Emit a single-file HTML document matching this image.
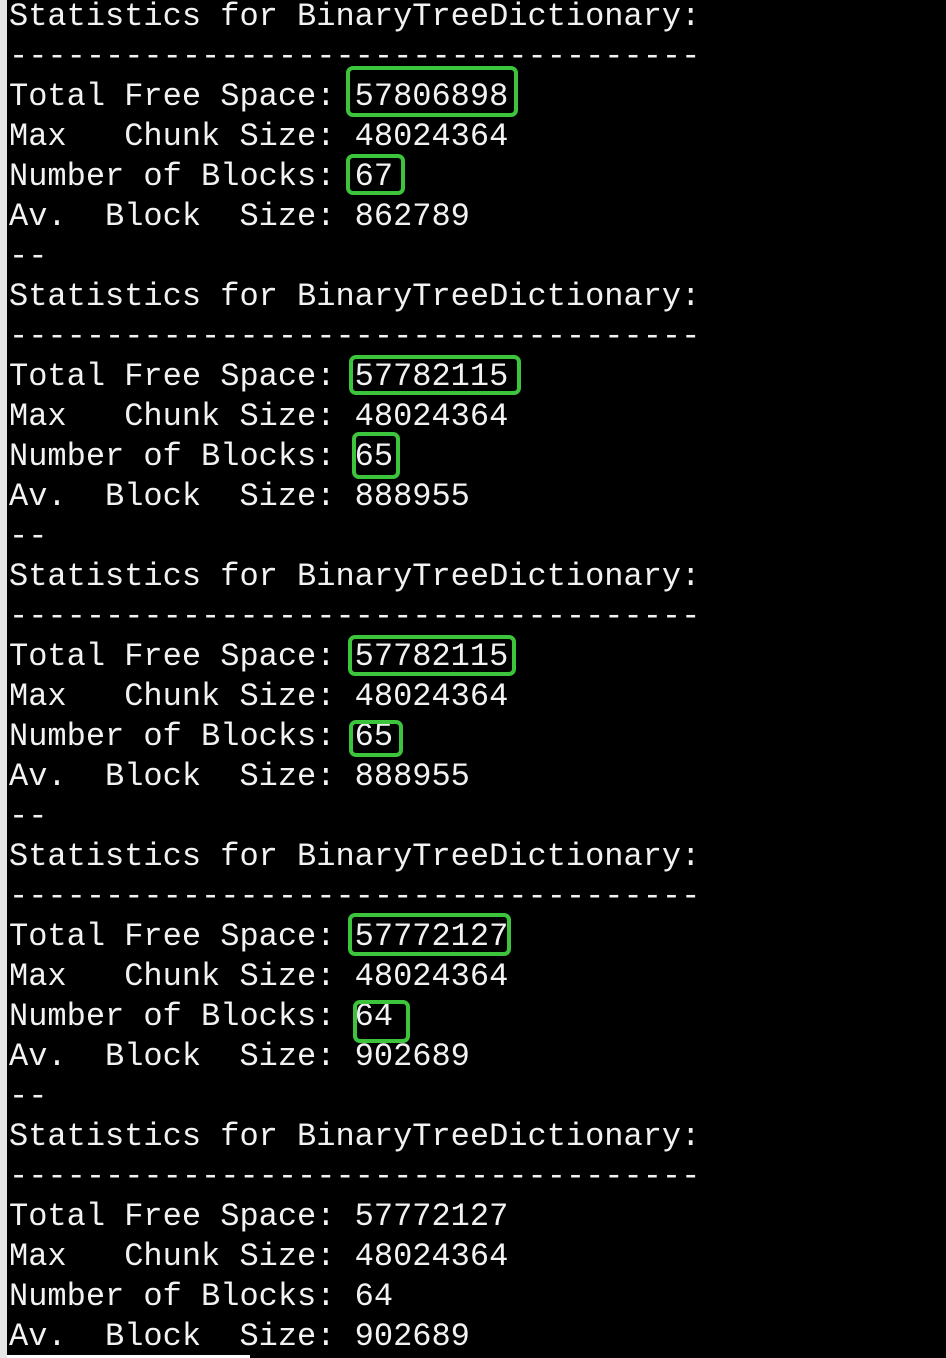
<!DOCTYPE html>
<html><head><style>
html,body{margin:0;padding:0;background:#000;width:946px;height:1358px;overflow:hidden;position:relative}
.strip{position:absolute;left:0;top:0;width:7px;height:1358px;background:#e6e6e6}
pre{position:absolute;left:9px;top:-3px;margin:0;font-family:"Liberation Mono",monospace;font-size:32px;line-height:40px;color:#f2f2f2;white-space:pre}
.b{position:absolute;border:4px solid #3cc43c;border-radius:7px;box-sizing:border-box}
.bot{position:absolute;left:7px;top:1355px;width:243px;height:3px;background:#fff}
</style></head><body>
<div class="strip"></div>
<pre>Statistics for BinaryTreeDictionary:
------------------------------------
Total Free Space: 57806898
Max   Chunk Size: 48024364
Number of Blocks: 67
Av.  Block  Size: 862789
--
Statistics for BinaryTreeDictionary:
------------------------------------
Total Free Space: 57782115
Max   Chunk Size: 48024364
Number of Blocks: 65
Av.  Block  Size: 888955
--
Statistics for BinaryTreeDictionary:
------------------------------------
Total Free Space: 57782115
Max   Chunk Size: 48024364
Number of Blocks: 65
Av.  Block  Size: 888955
--
Statistics for BinaryTreeDictionary:
------------------------------------
Total Free Space: 57772127
Max   Chunk Size: 48024364
Number of Blocks: 64
Av.  Block  Size: 902689
--
Statistics for BinaryTreeDictionary:
------------------------------------
Total Free Space: 57772127
Max   Chunk Size: 48024364
Number of Blocks: 64
Av.  Block  Size: 902689</pre>
<div class="b" style="left:346px;top:66px;width:172px;height:51px"></div>
<div class="b" style="left:346px;top:154px;width:59px;height:41px"></div>
<div class="b" style="left:349px;top:355px;width:172px;height:40px"></div>
<div class="b" style="left:352px;top:432px;width:48px;height:47px"></div>
<div class="b" style="left:348px;top:635px;width:168px;height:41px"></div>
<div class="b" style="left:349px;top:720px;width:54px;height:37px"></div>
<div class="b" style="left:348px;top:913px;width:163px;height:43px"></div>
<div class="b" style="left:353px;top:1000px;width:57px;height:43px"></div>
<div class="bot"></div>
</body></html>
